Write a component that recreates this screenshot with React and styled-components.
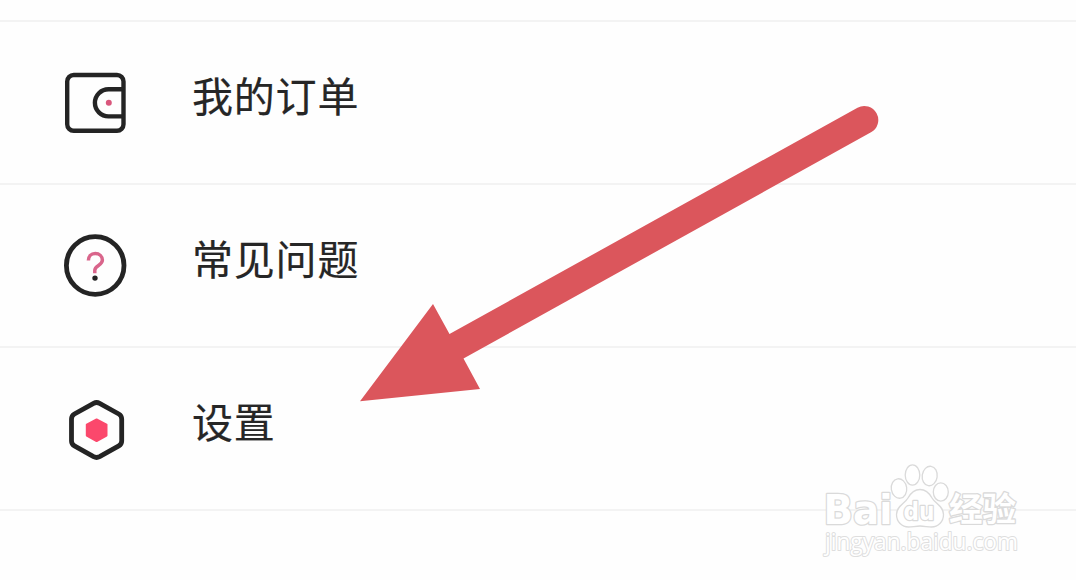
import styled, { createGlobalStyle } from 'styled-components';

const GlobalStyle = createGlobalStyle`
  body {
    margin: 0;
    background: #fefefe;
    overflow: hidden;
  }
`;

const PageStyles = styled.div`
  position: relative;
  box-sizing: border-box;
  width: 1076px;
  height: 580px;
  padding-top: 20px;
  overflow: hidden;
  font-family: 'Noto Sans CJK SC', sans-serif;
`;

const Menu = styled.ul`
  margin: 0;
  padding: 0;
  list-style: none;
  border-top: 2px solid #f3f3f3;
`;

const MenuItem = styled.li`
  display: flex;
  align-items: center;
  box-sizing: border-box;
  height: 163px;
  padding-left: 60px;
  border-bottom: 2px solid #f3f3f3;

  svg {
    flex: none;
    width: 70px;
    height: 70px;
  }
`;

const Label = styled.span`
  margin: 0 0 18px 62px;
  color: #262626;
  font-size: 41px;
  line-height: 60px;
  letter-spacing: 0.8px;
  -webkit-text-stroke: 0.2px #262626;
`;

const Arrow = styled.svg`
  position: absolute;
  top: 100px;
  left: 350px;
`;

const Watermark = styled.svg`
  position: absolute;
  top: 455px;
  left: 815px;
  fill: #fff;
  stroke: #dadada;
  stroke-width: 1.3;
  stroke-linejoin: round;

  text {
    font-family: 'DejaVu Sans', 'Noto Sans CJK SC', sans-serif;
    font-weight: 700;
    paint-order: stroke;
    stroke-width: 2.6;
  }

  .address {
    font-family: 'Open Sans', sans-serif;
    font-weight: 500;
    stroke: #dedede;
    stroke-width: 2;
  }
`;

const OrdersIcon = () => (
  <svg viewBox="0 0 70 70" fill="none" stroke="#242424" strokeWidth="4.4">
    <rect x="7.2" y="7" width="56.3" height="55.8" rx="6.5" />
    <path d="M63.5 21.2H48.5a13.6 13.6 0 0 0 0 27.2h15" />
    <circle cx="48.8" cy="34.8" r="3" fill="#d9577c" stroke="none" />
  </svg>
);

const HelpIcon = () => (
  <svg viewBox="0 0 70 70" fill="none">
    <circle cx="35.2" cy="34.5" r="28.8" stroke="#242424" strokeWidth="4.8" />
    <path
      d="M28.4 29.6c0-4.200 2.700-7.100 6.800-7.100 4.200 0 7.200 2.900 7.200 6.600 0 5.600-7.600 5-7.600 10.200v3"
      stroke="#d9658b"
      strokeWidth="3.5"
    />
    <circle cx="35" cy="47.1" r="2.7" fill="#242424" />
  </svg>
);

const SettingsIcon = () => (
  <svg viewBox="0 0 70 70" fill="none" strokeLinejoin="round">
    <path
      d="M33.6 9.3q3-1.6 6 0L58.8 20q2.9 1.7 2.9 5v22q0 3.2-2.9 4.9L39.6 62.7q-3 1.6-6 0L14.4 51.9q-2.9-1.7-2.9-4.9V25q0-3.3 2.9-5z"
      stroke="#242424"
      strokeWidth="4.8"
    />
    <path
      d="M36.6 25.5 46.5 30.6V41.6L36.6 47.1 26.8 41.6V30.6z"
      fill="#fb486c"
      stroke="#fb486c"
      strokeWidth="2"
    />
  </svg>
);

export default function App() {
  const items = [
    { label: '我的订单', Icon: OrdersIcon },
    { label: '常见问题', Icon: HelpIcon },
    { label: '设置', Icon: SettingsIcon },
  ];

  return (
    <PageStyles>
      <GlobalStyle />
      <Menu>
        {items.map(({ label, Icon }) => (
          <MenuItem key={label}>
            <Icon />
            <Label>{label}</Label>
          </MenuItem>
        ))}
      </Menu>
      <Arrow width="540" height="310" fill="#db565c">
        <path d="M10 301.3 83 204 99.5 234 507.5 7.7A14 14 0 0 1 521 32.3L113.5 258.5 130 289z" />
      </Arrow>
      <Watermark width="215" height="110">
        <text x="8.5" y="69" fontSize="41" textLength="69" lengthAdjust="spacingAndGlyphs">
          Bai
        </text>
        <ellipse cx="97.5" cy="20" rx="7.3" ry="10.2" />
        <ellipse cx="114.7" cy="21" rx="7.5" ry="9.8" transform="rotate(8 114.7 21)" />
        <ellipse cx="84" cy="33.5" rx="7.7" ry="9.8" transform="rotate(-8 84 33.5)" />
        <ellipse cx="125.8" cy="37" rx="7.5" ry="9.2" />
        <path d="M105 34.5c6 0 9.5 4 12 8.5 3.500 6 11.500 8 11.500 16.500 0 7.500-5.500 12.500-12 12.500-4 0-7-1-11.500-1s-7.500 1-11.500 1c-6.500 0-12-5-12-12.500 0-8.500 8-10.500 11.500-16.500 2.500-4.500 6-8.500 12-8.500z" />
        <text x="88.5" y="65" fontSize="24" textLength="31" lengthAdjust="spacingAndGlyphs">
          du
        </text>
        <text x="134" y="66" fontSize="33" textLength="67" lengthAdjust="spacingAndGlyphs">
          经验
        </text>
        <text className="address" x="10" y="95" fontSize="23" textLength="193" lengthAdjust="spacingAndGlyphs">
          jingyan.baidu.com
        </text>
      </Watermark>
    </PageStyles>
  );
}
